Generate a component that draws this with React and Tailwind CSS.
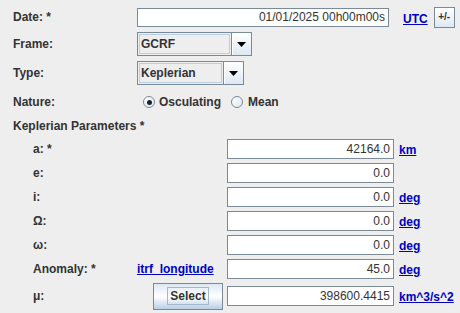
import React from "react";

const font = { fontFamily: '"Liberation Sans", Arial, sans-serif' };

function Field({ value, w = "w-[167px]", h = "h-[20px]" }) {
  return (
    <div
      className={`${w} ${h} box-border border border-[#7a8a99] bg-white flex items-center justify-end pr-[3px] text-[12px] text-[#333333] leading-none shadow-[inset_-1px_-1px_0_#ffffff]`}
    >
      {value}
    </div>
  );
}

function Arrow() {
  return (
    <svg width="9" height="5" viewBox="0 0 9 5">
      <path d="M0 0 H9 L4.5 5 Z" fill="#000" />
    </svg>
  );
}

function Combo({ label, w }) {
  return (
    <div className={`${w} h-[24px] box-border border border-[#7a8a99] bg-[#eeeeee] flex`}>
      <div className="flex-1 flex items-center pl-[1px] text-[12px] font-bold text-[#333333] border border-[#b8cfe5] m-[1px]">
        {label}
      </div>
      <div className="w-[20px] border-l border-[#7a8a99] bg-gradient-to-b from-[#ffffff] to-[#dde8f3] flex items-center justify-center shadow-[inset_1px_1px_0_#ffffff]">
        <Arrow />
      </div>
    </div>
  );
}

function Radio({ checked }) {
  return (
    <div className="w-[12px] h-[12px] rounded-full border border-[#7a8a99] bg-gradient-to-br from-[#ffffff] to-[#dde8f3] flex items-center justify-center">
      {checked && <div className="w-[5px] h-[5px] rounded-full bg-[#222222]" />}
    </div>
  );
}

function Link({ children }) {
  return <span className="text-[12px] font-bold text-[#0000c0] underline leading-none">{children}</span>;
}

function Label({ children, w = "w-[124px]" }) {
  return <div className={`${w} shrink-0 text-[12px] font-bold text-[#333333] leading-none`}>{children}</div>;
}

function ParamRow({ label, middle, value, unit, h = "h-[24px]" }) {
  return (
    <div className={`flex items-center ${h}`}>
      <div className="w-[20px] shrink-0" />
      <Label w="w-[104px]">{label}</Label>
      <div className="w-[90px] shrink-0 flex items-center">{middle}</div>
      <Field value={value} />
      <div className="ml-[5px]">{unit && <Link>{unit}</Link>}</div>
    </div>
  );
}

export default function App() {
  return (
    <div style={font} className="w-[460px] h-[313px] bg-[#eeeeee] overflow-hidden pl-[13px] pt-[7px] box-border">
      {/* Date */}
      <div className="flex items-center h-[20px]">
        <Label>Date: *</Label>
        <Field value="01/01/2025 00h00m00s" w="w-[252px]" h="h-[19px]" />
        <div className="ml-[14px] mt-[2px]">
          <Link>UTC</Link>
        </div>
        <div className="ml-[6px] w-[21px] h-[21px] box-border border border-[#7a8a99] bg-gradient-to-b from-[#ffffff] to-[#dde8f3] flex items-center justify-center text-[10px] font-bold text-[#333333] leading-none">
          +/-
        </div>
      </div>
      {/* Frame */}
      <div className="flex items-center h-[24px] mt-[5px]">
        <Label>Frame:</Label>
        <Combo label="GCRF" w="w-[115px]" />
      </div>
      {/* Type */}
      <div className="flex items-center h-[24px] mt-[5px]">
        <Label>Type:</Label>
        <Combo label="Keplerian" w="w-[107px]" />
      </div>
      {/* Nature */}
      <div className="flex items-center h-[20px] mt-[7px]">
        <Label w="w-[130px]">Nature:</Label>
        <Radio checked />
        <span className="ml-[4px] text-[12px] font-bold text-[#333333] leading-none">Osculating</span>
        <div className="ml-[10px]">
          <Radio />
        </div>
        <span className="ml-[5px] text-[12px] font-bold text-[#333333] leading-none">Mean</span>
      </div>
      {/* Keplerian Parameters */}
      <div className="flex items-center h-[20px] mt-[4px]">
        <Label w="w-[200px]">Keplerian Parameters *</Label>
      </div>
      <div className="mt-[1px]">
        <ParamRow label="a: *" value="42164.0" unit="km" />
        <ParamRow label="e:" value="0.0" />
        <ParamRow label="i:" value="0.0" unit="deg" />
        <ParamRow label="Ω:" value="0.0" unit="deg" />
        <ParamRow label="ω:" value="0.0" unit="deg" />
        <ParamRow label="Anomaly: *" value="45.0" unit="deg" middle={<Link>itrf_longitude</Link>} />
        <ParamRow
          label="μ:"
          value="398600.4415"
          unit="km^3/s^2"
          h="h-[30px]"
          middle={
            <div className="ml-[16px] w-[70px] h-[27px] box-border border border-[#7a8a99] bg-gradient-to-b from-[#dde8f3] via-[#ffffff] to-[#b8cfe5] flex items-center justify-center">
              <span className="px-[2px] py-[2px] border border-[#a3b8cc] text-[12px] font-bold text-[#333333] leading-none">
                Select
              </span>
            </div>
          }
        />
      </div>
    </div>
  );
}
